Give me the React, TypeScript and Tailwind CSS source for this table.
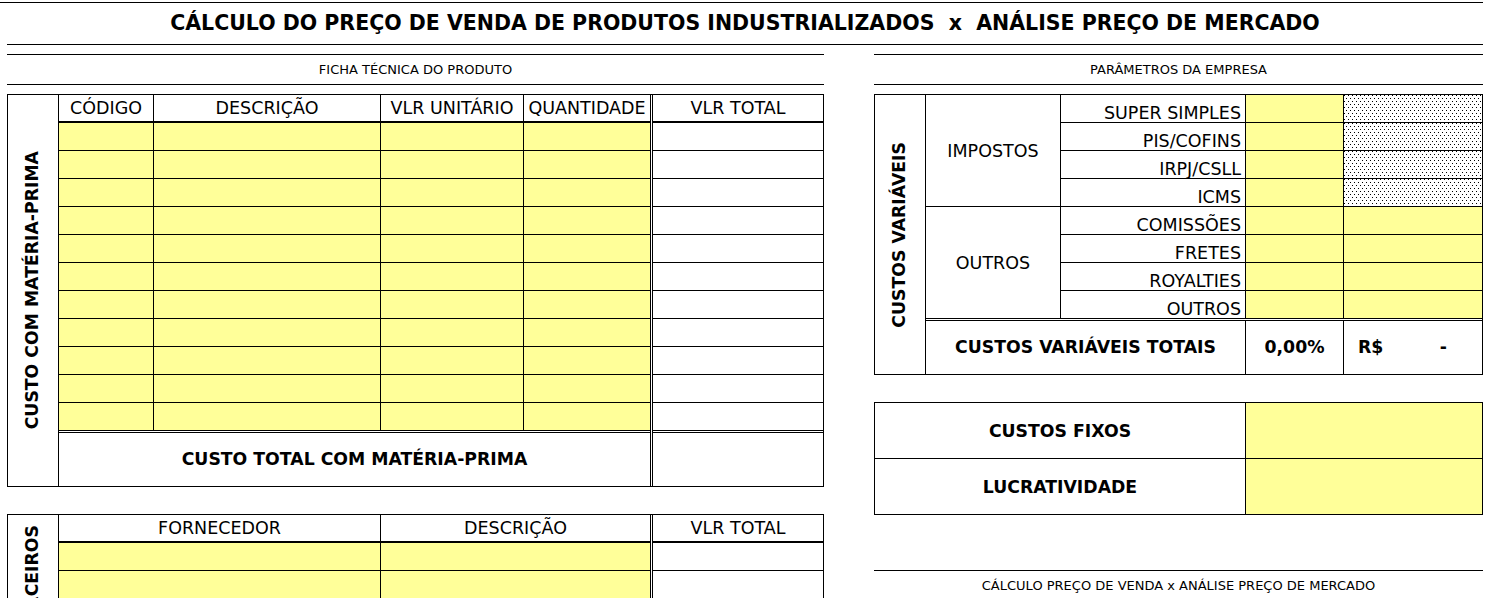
import type { ReactNode } from 'react'

const yellow = 'bg-[#ffff99]'
const dotted =
  'bg-white [background-image:conic-gradient(at_1px_1px,transparent_75%,#000_0),conic-gradient(at_1px_1px,transparent_75%,#000_0)] [background-size:4px_6px] [background-position:0_0,2px_3px]'

function SectionTitle({ children }: { children: ReactNode }) {
  return (
    <div className="h-[31px] border-y border-black flex items-center justify-center text-[13px] leading-none">
      {children}
    </div>
  )
}

function SideLabel({ children }: { children: ReactNode }) {
  return (
    <span className="[writing-mode:vertical-rl] rotate-180 whitespace-nowrap font-bold text-[17.3px] leading-none">
      {children}
    </span>
  )
}

const taxRows = ['SUPER SIMPLES', 'PIS/COFINS', 'IRPJ/CSLL', 'ICMS']
const otherRows = ['COMISSÕES', 'FRETES', 'ROYALTIES', 'OUTROS']

export default function App() {
  return (
    <div className="w-[1488px] h-[598px] overflow-hidden bg-white text-black font-['DejaVu_Sans',sans-serif]">
      <div className="mt-[2px] w-[1483px] border-t border-black">
        <div className="ml-[7px] h-[42px] border-b border-black flex items-center justify-center text-[20.5px] font-bold leading-none whitespace-pre">
          {'CÁLCULO DO PREÇO DE VENDA DE PRODUTOS INDUSTRIALIZADOS  x  ANÁLISE PREÇO DE MERCADO'}
        </div>
      </div>

      <div className="ml-[7px] mt-[9px] flex items-start gap-[50px]">
        {/* left: ficha técnica */}
        <div className="w-[817px] shrink-0">
          <SectionTitle>FICHA TÉCNICA DO PRODUTO</SectionTitle>

          <div className="mt-[9px] grid grid-cols-[50px_94px_226px_142px_126px_1px_170px] grid-rows-[26px_0px_repeat(11,27px)_1px_53px] gap-px bg-black p-px text-[17.5px] leading-none">
            <div className="row-span-15 bg-white flex items-center justify-center">
              <SideLabel>CUSTO COM MATÉRIA-PRIMA</SideLabel>
            </div>
            <div className="col-start-6 row-start-1 row-span-15 bg-white" />
            {['CÓDIGO', 'DESCRIÇÃO', 'VLR UNITÁRIO', 'QUANTIDADE', 'VLR TOTAL'].map(h => (
              <div key={h} className="bg-white flex items-center justify-center pt-[2px]">{h}</div>
            ))}
            {[0, 1, 2, 3, 4].map(i => <div key={'z' + i} />)}
            {Array.from({ length: 11 }).map((_, r) => (
              <div key={r} className="contents">
                <div className={yellow} />
                <div className={yellow} />
                <div className={yellow} />
                <div className={yellow} />
                <div className="bg-white" />
              </div>
            ))}
            <div className="col-span-4 bg-white" />
            <div className="bg-white" />
            <div className="col-span-4 bg-white flex items-center justify-center font-bold text-[17.3px]">
              CUSTO TOTAL COM MATÉRIA-PRIMA
            </div>
            <div className="bg-white" />
          </div>

          <div className="mt-[27px] grid grid-cols-[50px_321px_269px_1px_170px] grid-rows-[26px_0px_repeat(8,27px)] gap-px bg-black p-px text-[17.5px] leading-none">
            <div className="row-span-10 bg-white flex items-center justify-center">
              <SideLabel>CUSTO COM TERCEIROS</SideLabel>
            </div>
            <div className="col-start-4 row-start-1 row-span-10 bg-white" />
            {['FORNECEDOR', 'DESCRIÇÃO', 'VLR TOTAL'].map(h => (
              <div key={h} className="bg-white flex items-center justify-center pt-[2px]">{h}</div>
            ))}
            {[0, 1, 2].map(i => <div key={'z' + i} />)}
            {Array.from({ length: 8 }).map((_, r) => (
              <div key={r} className="contents">
                <div className={yellow} />
                <div className={yellow} />
                <div className="bg-white" />
              </div>
            ))}
          </div>
        </div>

        {/* right: parâmetros */}
        <div className="w-[609px] shrink-0">
          <SectionTitle>PARÂMETROS DA EMPRESA</SectionTitle>

          <div className="mt-[9px] grid grid-cols-[50px_134px_184px_97px_138px] grid-rows-[repeat(8,27px)_1px_53px] gap-px bg-black p-px text-[17.5px] leading-none">
            <div className="row-span-10 bg-white flex items-center justify-center">
              <SideLabel>CUSTOS VARIÁVEIS</SideLabel>
            </div>
            <div className="row-span-4 bg-white flex items-center justify-center pt-[2px]">IMPOSTOS</div>
            {taxRows.map(t => (
              <div key={t} className="contents">
                <div className="bg-white flex items-end justify-end pr-[4px] leading-[18px]">{t}</div>
                <div className={yellow} />
                <div className={dotted} />
              </div>
            ))}
            <div className="row-span-4 bg-white flex items-center justify-center pt-[2px]">OUTROS</div>
            {otherRows.map(t => (
              <div key={t} className="contents">
                <div className="bg-white flex items-end justify-end pr-[4px] leading-[18px]">{t}</div>
                <div className={yellow} />
                <div className={yellow} />
              </div>
            ))}
            <div className="col-span-4 bg-white" />
            <div className="col-span-2 bg-white flex items-center justify-center font-bold text-[17.3px]">
              CUSTOS VARIÁVEIS TOTAIS
            </div>
            <div className="bg-white flex items-center justify-center font-bold text-[17.3px]">0,00%</div>
            <div className="bg-white flex items-center justify-between pl-[14px] pr-[35px] font-bold text-[17.3px]">
              <span>R$</span>
              <span>-</span>
            </div>
          </div>

          <div className="mt-[27px] grid grid-cols-[370px_236px] grid-rows-[55px_55px] gap-px bg-black p-px text-[17.3px] font-bold leading-none">
            <div className="bg-white flex items-center justify-center pt-[2px]">CUSTOS FIXOS</div>
            <div className={yellow} />
            <div className="bg-white flex items-center justify-center pt-[2px]">LUCRATIVIDADE</div>
            <div className={yellow} />
          </div>

          <div className="mt-[55px] h-[29px] border-t border-black flex items-center justify-center text-[13px] leading-none">
            CÁLCULO PREÇO DE VENDA x ANÁLISE PREÇO DE MERCADO
          </div>
        </div>
      </div>
    </div>
  )
}
